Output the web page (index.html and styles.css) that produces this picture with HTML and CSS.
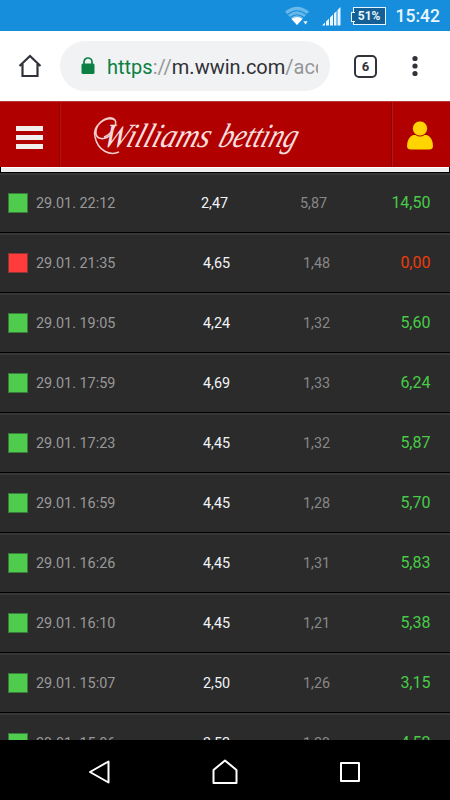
FILE: index.html
```html
<!DOCTYPE html>
<html lang="en">
<head>
    <meta charset="utf-8">
    <meta name="viewport" content="width=device-width, initial-scale=1">
    <title>Williams betting</title>
    <link rel="stylesheet" href="styles.css">
</head>
<body>
    <div class="status-bar">
        <svg class="wifi" width="26" height="20" viewBox="0 0 26 20">
            <path d="M0 5.5Q12 -4 24 5.5L12 19Z" fill="#69b8ea"/>
            <path d="M2.5 8.5Q12 1 21.5 8.5M5 11.5Q12 6 19 11.5" fill="none" stroke="#168edb" stroke-width="1.2"/>
            <path d="M6.5 13Q12 9 17.5 13L12 19Z" fill="#fff"/>
            <path d="M18 15h5l-2.5 4z" fill="#fff" stroke="#168edb" stroke-width=".6"/>
        </svg>
        <svg class="signal" width="19" height="19" viewBox="0 0 19 19">
            <path d="M0 18.5L3 15.5V18.5ZM4 14.5L7 11.5V18.5H4ZM8 10.5L11 7.5V18.5H8ZM12 6.5L14.5 4V18.5H12ZM15.5 3L18.5 0V18.5H15.5Z" fill="#e9f6ff"/>
        </svg>
        <span class="battery">51%</span>
        <span class="clock">15:42</span>
    </div>

    <div class="browser-bar">
        <svg class="home" width="24" height="24" viewBox="0 0 24 24">
            <path d="M1.5 12L12 2L22.5 12M4.5 10V22H19.5V10" fill="none" stroke="#30343a" stroke-width="2.2"/>
        </svg>
        <div class="address">
            <svg class="lock" width="14" height="18" viewBox="0 0 14 18">
                <path d="M3 8V5a4 4 0 0 1 8 0V8" fill="none" stroke="#0b8043" stroke-width="1.7"/>
                <rect x=".5" y="6.5" width="13" height="10.5" rx="1.5" fill="#0b8043"/>
            </svg>
            <span class="url"><span class="scheme">https</span><span class="muted">://</span>m.wwin.com<span class="muted">/acc</span></span>
        </div>
        <span class="tabs">6</span>
        <svg class="more" width="6" height="22" viewBox="0 0 6 22">
            <g fill="#30343a"><circle cx="3" cy="3.5" r="2.6"/><circle cx="3" cy="11" r="2.6"/><circle cx="3" cy="18.5" r="2.6"/></g>
        </svg>
    </div>

    <header class="header">
        <div class="menu"><span></span><span></span><span></span></div>
        <div class="brand">
            <svg width="216" height="54" viewBox="0 0 216 54">
                <g transform="translate(13 38) skewX(-18)">
                    <text class="logo" textLength="107" lengthAdjust="spacingAndGlyphs">Williams</text>
                    <text class="logo" x="116" textLength="78" lengthAdjust="spacingAndGlyphs">betting</text>
                </g>
                <path class="swash" d="M16 28C22 26 30 16 27 11C23 5 9 12 8 22C7 31 17 32 23 25M27 11C17 6 4 18 7 28C10 42 22 47 31 43"/>
            </svg>
        </div>
        <div class="account">
            <svg width="26" height="29" viewBox="0 0 26 29">
                <path d="M6 14H20Q26 17 26 25Q26 28.5 22 28.5H4Q0 28.5 0 25Q0 17 6 14Z" fill="#ffd400"/>
                <circle cx="13" cy="7.5" r="7.6" fill="#ffd400" stroke="#b40000" stroke-width="1"/>
            </svg>
        </div>
    </header>
    <div class="header-line"></div>

    <main class="bets">
        <div class="bet wide"><i class="mark"></i><span class="date">29.01. 22:12</span><span class="odds">2,47</span><span class="stake">5,87</span><span class="win">14,50</span></div>
        <div class="bet lost"><i class="mark"></i><span class="date">29.01. 21:35</span><span class="odds">4,65</span><span class="stake">1,48</span><span class="win">0,00</span></div>
        <div class="bet"><i class="mark"></i><span class="date">29.01. 19:05</span><span class="odds">4,24</span><span class="stake">1,32</span><span class="win">5,60</span></div>
        <div class="bet"><i class="mark"></i><span class="date">29.01. 17:59</span><span class="odds">4,69</span><span class="stake">1,33</span><span class="win">6,24</span></div>
        <div class="bet"><i class="mark"></i><span class="date">29.01. 17:23</span><span class="odds">4,45</span><span class="stake">1,32</span><span class="win">5,87</span></div>
        <div class="bet"><i class="mark"></i><span class="date">29.01. 16:59</span><span class="odds">4,45</span><span class="stake">1,28</span><span class="win">5,70</span></div>
        <div class="bet"><i class="mark"></i><span class="date">29.01. 16:26</span><span class="odds">4,45</span><span class="stake">1,31</span><span class="win">5,83</span></div>
        <div class="bet"><i class="mark"></i><span class="date">29.01. 16:10</span><span class="odds">4,45</span><span class="stake">1,21</span><span class="win">5,38</span></div>
        <div class="bet"><i class="mark"></i><span class="date">29.01. 15:07</span><span class="odds">2,50</span><span class="stake">1,26</span><span class="win">3,15</span></div>
        <div class="bet"><i class="mark"></i><span class="date">29.01. 15:06</span><span class="odds">3,52</span><span class="stake">1,29</span><span class="win">4,52</span></div>
    </main>

    <nav class="nav-bar">
        <svg width="24" height="26" viewBox="0 0 24 26"><path d="M21.5 2.5V23.5L3 13Z"/></svg>
        <svg width="26" height="26" viewBox="0 0 26 26"><path d="M1.5 24V11L13 1.5L24.5 11V24Z"/></svg>
        <svg width="22" height="22" viewBox="0 0 22 22"><path d="M2 2H20V20H2Z"/></svg>
    </nav>
</body>
</html>
```

FILE: styles.css
```css
* {
    box-sizing: border-box;
}
body {
    margin: 0;
    height: 800px;
    display: flex;
    flex-direction: column;
    overflow: hidden;
    background: #000;
    font-family: Roboto, sans-serif;
}
svg {
    display: block;
    flex: none;
}
.status-bar {
    height: 31px;
    flex: none;
    display: flex;
    align-items: center;
    justify-content: flex-end;
    padding: 1px 10px 0 0;
    background: #168edb;
    color: #e9f6ff;
}
.signal {
    margin: 0 12px 0 11px;
}
.battery {
    position: relative;
    width: 33px;
    height: 18px;
    border: 1px solid #e9f6ff;
    background: #145f94;
    font-size: 12px;
    font-weight: 700;
    line-height: 16px;
    text-align: center;
    margin-right: 10px;
}
.battery::before {
    content: "";
    position: absolute;
    left: -3px;
    top: 4px;
    width: 3px;
    height: 8px;
    border: 1px solid #e9f6ff;
    border-right: none;
    background: #145f94;
}
.clock {
    font-size: 17.5px;
    font-weight: 500;
    line-height: 20px;
}
.browser-bar {
    height: 70px;
    flex: none;
    display: flex;
    align-items: center;
    background: #fff;
    padding-left: 18px;
}
.address {
    width: 270px;
    height: 50px;
    margin-left: 18px;
    padding: 0 12px 0 21px;
    border-radius: 25px;
    background: #f0f2f4;
    display: flex;
    align-items: center;
}
.url {
    margin-left: 12px;
    width: 211px;
    overflow: hidden;
    white-space: nowrap;
    font-size: 20px;
    line-height: 28px;
    padding-top: 1px;
    color: #303134;
}
.scheme {
    color: #0b8043;
}
.muted {
    color: #949698;
}
.tabs {
    width: 23px;
    height: 23px;
    margin-left: 24px;
    border: 2px solid #30343a;
    border-radius: 5px;
    color: #30343a;
    font-size: 13px;
    font-weight: 700;
    line-height: 19px;
    text-align: center;
}
.more {
    margin-left: 35px;
}
.header {
    height: 66px;
    flex: none;
    display: flex;
    background: #b00000;
    border-top: 1px solid #b93838;
}
.menu {
    width: 60px;
    border-right: 1px solid #8b0000;
    display: flex;
    flex-direction: column;
    justify-content: center;
    align-items: center;
    gap: 4px;
    padding: 6px 1px 0 0;
}
.menu span {
    width: 27px;
    height: 5px;
    background: #f3eeee;
}
.brand {
    flex: 1;
    padding: 7px 0 0 27px;
    border-left: 1px solid #b91010;
}
.logo {
    font-family: "Liberation Serif", serif;
    font-style: italic;
    font-size: 34px;
    fill: #f8dede;
}
.swash {
    fill: none;
    stroke: #f3cccc;
    stroke-width: 1.5;
}
.account {
    width: 59px;
    border-left: 1px solid #850000;
    box-shadow: inset 1px 0 #bd1515;
    display: flex;
    justify-content: center;
    padding: 19px 2px 0 0;
}
.header-line {
    height: 5px;
    flex: none;
    margin: 0 1px 1px;
    background: #eee;
    border-top: 1px solid #fff;
}
.bets {
    height: 567px;
    flex: none;
    overflow: hidden;
}
.bet {
    height: 60px;
    display: grid;
    grid-template-columns: 28px 167px 100px 72px 55.5px;
    align-items: center;
    padding-left: 8px;
    background: #2b2b2b;
    border-top: 2px solid #373737;
    border-bottom: 1px solid #000;
    font-size: 14.4px;
    color: #888;
}
.bet.wide {
    grid-template-columns: 28px 165px 99px 75px 55.5px;
}
.mark {
    width: 20px;
    height: 20px;
    margin-bottom: 2px;
    background: #4fcc4d;
    border: 1px solid #397b38;
}
.lost .mark {
    background: #ff3b3b;
    border-color: #8d3434;
}
.date {
    color: #999;
}
.odds {
    color: #f1f5f9;
}
.win {
    font-size: 16px;
    margin-bottom: 2px;
    color: #48cb48;
    text-align: right;
}
.lost .win {
    color: #eb3d0b;
}
.nav-bar {
    flex: 1;
    display: flex;
    align-items: center;
    justify-content: center;
    gap: 101px;
    padding: 3px 2px 0 0;
    background: #000;
}
.nav-bar path {
    fill: none;
    stroke: #fff;
    stroke-width: 2;
    stroke-linejoin: round;
}
```
